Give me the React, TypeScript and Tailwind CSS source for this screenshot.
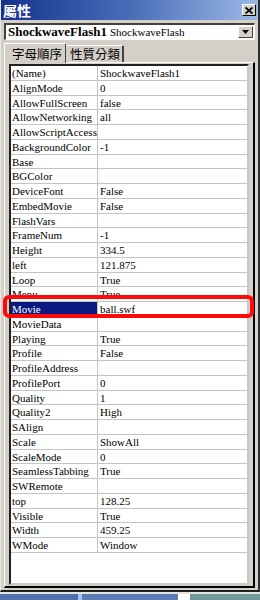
import React from 'react';

const rows: [string, string][] = [
  ['(Name)', 'ShockwaveFlash1'],
  ['AlignMode', '0'],
  ['AllowFullScreen', 'false'],
  ['AllowNetworking', 'all'],
  ['AllowScriptAccess', ''],
  ['BackgroundColor', '-1'],
  ['Base', ''],
  ['BGColor', ''],
  ['DeviceFont', 'False'],
  ['EmbedMovie', 'False'],
  ['FlashVars', ''],
  ['FrameNum', '-1'],
  ['Height', '334.5'],
  ['left', '121.875'],
  ['Loop', 'True'],
  ['Menu', 'True'],
  ['Movie', 'ball.swf'],
  ['MovieData', ''],
  ['Playing', 'True'],
  ['Profile', 'False'],
  ['ProfileAddress', ''],
  ['ProfilePort', '0'],
  ['Quality', '1'],
  ['Quality2', 'High'],
  ['SAlign', ''],
  ['Scale', 'ShowAll'],
  ['ScaleMode', '0'],
  ['SeamlessTabbing', 'True'],
  ['SWRemote', ''],
  ['top', '128.25'],
  ['Visible', 'True'],
  ['Width', '459.25'],
  ['WMode', 'Window'],
];

const serif = "font-['Liberation_Serif','Noto_Sans_CJK_TC',serif]";
const cjk = "font-['Noto_Sans_CJK_TC','Liberation_Sans',sans-serif]";

const App: React.FC = () => {
  return (
    <div className="w-[260px] h-[600px] bg-[#d4d0c8] flex flex-col overflow-hidden">
      {/* window */}
      <div className="relative h-[592px] flex flex-col bg-[#d4d0c8] border-l border-[#e8e8e8] border-r-2 border-r-[#303030] border-b-2 border-b-[#202020]">
        {/* title bar */}
        <div className="h-[20px] flex items-center justify-between bg-gradient-to-r from-[#16328e] via-[#4a6cb8] to-[#9cb8e4] pl-[2px] pr-[2px]">
          <span className={`${cjk} text-white text-[14px] leading-[20px] font-bold`}>屬性</span>
          <div className="w-[14px] h-[12px] bg-[#d4d0c8] border-t border-l border-white border-r border-b border-r-black border-b-black flex items-center justify-center">
            <svg width="8" height="7" viewBox="0 0 8 7">
              <path d="M0.5 0.5 L7.5 6.5 M7.5 0.5 L0.5 6.5" stroke="#000" strokeWidth="1.8" />
            </svg>
          </div>
        </div>

        {/* combo */}
        <div className="mt-[3px] mx-[3px] h-[17px] bg-white border-t-2 border-l-2 border-t-[#404040] border-l-[#404040] border-r border-b border-r-white border-b-white flex items-center">
          <div className={`${serif} flex-1 flex items-center pl-[2px] text-black whitespace-nowrap`}>
            <span className="text-[13px] font-bold leading-[14px]">ShockwaveFlash1</span>
            <span className="text-[11px] leading-[14px] ml-[3px]">ShockwaveFlash</span>
          </div>
          <div className="w-[15px] h-[12px] mr-[1px] bg-[#d4d0c8] border-t border-l border-white border-r border-b border-r-[#404040] border-b-[#404040] flex items-center justify-center">
            <svg width="7" height="4" viewBox="0 0 7 4">
              <path d="M0 0 H7 L3.5 4 Z" fill="#000" />
            </svg>
          </div>
        </div>

        {/* tabs */}
        <div className="mt-[2px] h-[20px] flex items-end pl-[3px]">
          <div className="h-[20px] w-[62px] border-t border-l border-white border-r border-r-[#404040] rounded-t-[2px] bg-[#d4d0c8] flex items-center pl-[7px] relative z-10 -mb-[1px]">
            <span className={`${cjk} text-[12.5px] leading-[14px] text-black`}>字母順序</span>
          </div>
          <div className="h-[17px] w-[58px] border-t border-white border-r-2 border-r-[#404040] rounded-t-[2px] flex items-center pl-[4px]">
            <span className={`${cjk} text-[12.5px] leading-[14px] text-black`}>性質分類</span>
          </div>
        </div>

        {/* tab page */}
        <div className="flex-1 mx-[3px] mb-[2px] border-t border-l border-white border-r-2 border-b-2 border-r-black border-b-black flex flex-col px-[4px] pt-[1px] pb-[1px]">
          <div className="flex-1 bg-white border-t-2 border-l-2 border-t-[#202020] border-l-[#202020] border-r-2 border-b-2 border-r-[#c8c8c8] border-b-[#c8c8c8] flex flex-col">
            {rows.map(([name, value]) => {
              const selected = name === 'Movie';
              return (
                <div key={name} className="h-[14.75px] flex border-b border-[#c4c4c4] shrink-0">
                  <div
                    className={`${serif} w-[87px] shrink-0 border-r border-[#c4c4c4] pl-[1px] text-[11px] leading-[14px] whitespace-nowrap overflow-hidden ${
                      selected ? 'bg-[#0a1a80] text-white' : 'text-black'
                    }`}
                  >
                    {name}
                  </div>
                  <div className={`${serif} flex-1 pl-[2px] text-[11px] leading-[14px] text-black whitespace-nowrap`}>
                    {value}
                  </div>
                </div>
              );
            })}
          </div>
        </div>

        {/* red annotation */}
        <div className="absolute left-[2px] top-[295px] w-[251px] h-[23px] border-[4px] border-[#ff0a0a] rounded-[6px] pointer-events-none" />
      </div>

      {/* background strip */}
      <div className="h-[2px] bg-[#e4e4e4]" />
      <div className="flex-1 flex">
        <div className="w-[78px] bg-[#4f72ad]" />
        <div className="w-[4px] bg-[#a8c4ea]" />
        <div className="w-[96px] bg-[#5a7db6]" />
        <div className="w-[12px] bg-white" />
        <div className="flex-1 bg-[#6f9c9a]" />
      </div>
    </div>
  );
};

export default App;
